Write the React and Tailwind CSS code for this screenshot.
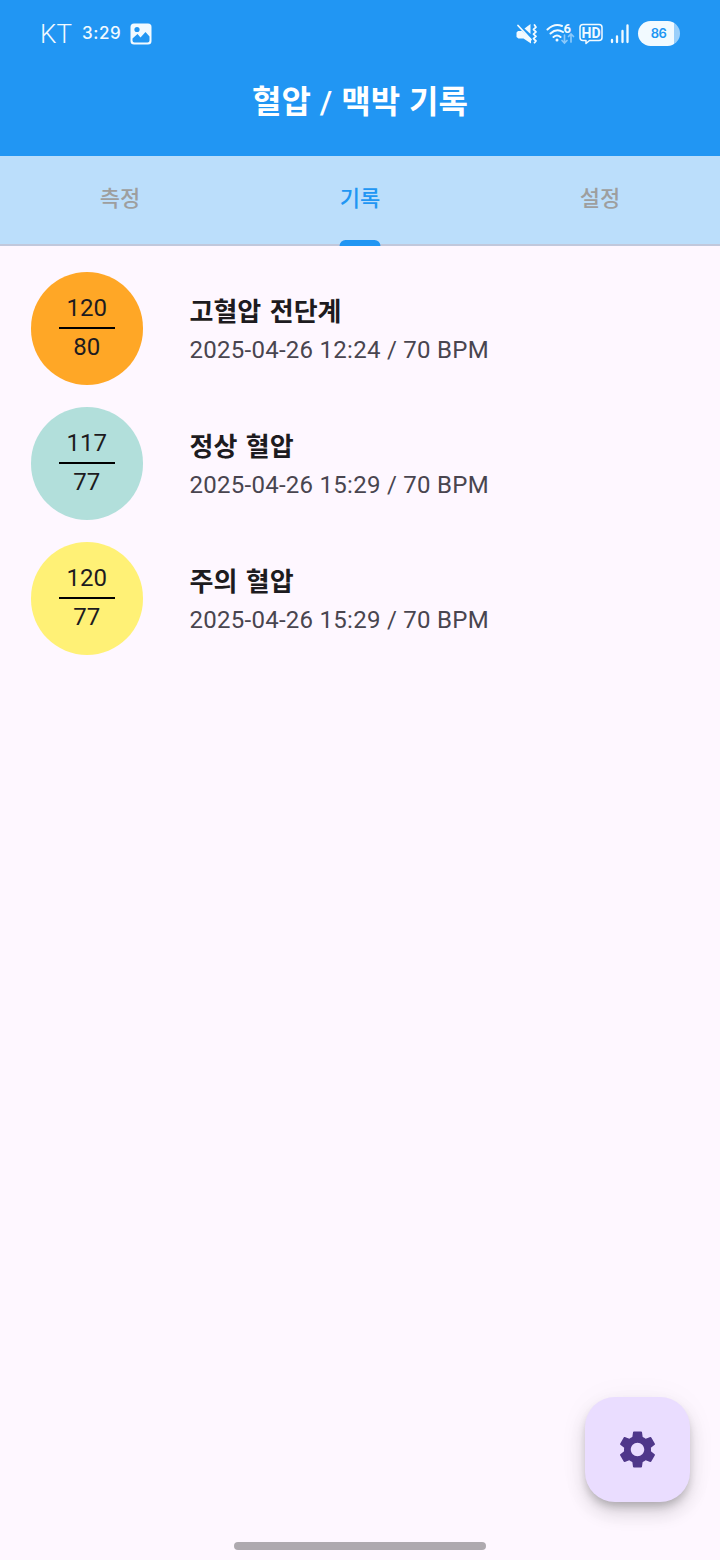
import { MdSettings } from "react-icons/md";

const tabs = [
  { id: "measure", label: "측정" },
  { id: "history", label: "기록" },
  { id: "settings", label: "설정" },
];

const records = [
  { id: 1, systolic: 120, diastolic: 80, status: "고혈압 전단계", date: "2025-04-26 12:24", pulse: 70, color: "bg-[#ffa726]" },
  { id: 2, systolic: 117, diastolic: 77, status: "정상 혈압", date: "2025-04-26 15:29", pulse: 70, color: "bg-[#b2dfdb]" },
  { id: 3, systolic: 120, diastolic: 77, status: "주의 혈압", date: "2025-04-26 15:29", pulse: 70, color: "bg-[#fff176]" },
];

const GalleryIcon = () => (
  <svg width="22" height="22" viewBox="0 0 22 22">
    <rect x="0.500" y="0.500" width="21" height="21" rx="3.5" fill="#f2faff" />
    <circle cx="7" cy="6.500" r="2.600" fill="#2196f3" />
    <path d="M2.500 15.500l5-4.500 3 3.500 5-5.500 4 4.500v4q0 2-2 2H4.500q-2 0-2-2Z" fill="#2196f3" />
  </svg>
);

const VibrateIcon = () => (
  <svg width="22" height="22" viewBox="0 0 22 22" fill="none" stroke="#f2faff" strokeLinecap="round">
    <path d="M2 8h4l9 8v4.500L7.500 15.500H2.500L.5 14V9.500Z" fill="#f2faff" stroke="none" />
    <path d="M14.500 1v10L8.500 5.500Z" fill="#f2faff" stroke="none" />
    <path d="M3.500 2.500l15 16" stroke="#2196f3" strokeWidth="1.200" />
    <path d="M2 2.500l13 14" strokeWidth="1.800" />
    <path d="M18.500 2l1.500 2.200-2.500 2.300 2.500 2.300-2.500 2.300 2.500 2.300-2.500 2.300 2.500 2.300-1.500 1.700" strokeWidth="1.800" strokeLinejoin="round" />
  </svg>
);

const WifiIcon = () => (
  <svg width="29" height="24" viewBox="0 0 29 24" fill="none" strokeLinecap="round">
    <path d="M1.500 7.500Q8.500 1 16 4M4.500 11.500Q10.500 6 17 10M7.500 15Q11 12 14.500 15" stroke="#f2faff" strokeWidth="2" />
    <circle cx="11" cy="18" r="1.500" fill="#f2faff" />
    <text x="17.500" y="10.500" fill="#f2faff" className="font-['Roboto',sans-serif] text-[13px] font-bold">6</text>
    <path d="M18.500 13v7.500M16 18.500l2.500 2.500 2.500-2.500M25 20v-7.500M22.500 14.500L25 12l2.500 2.500" stroke="#8ac8fa" strokeWidth="1.700" />
  </svg>
);

const HdIcon = () => (
  <svg width="24" height="22" viewBox="0 0 24 22" fill="none">
    <path d="M4 1.500h16q3 0 3 3v10q0 3-3 3h-9.500L7 20.500v-3H4q-3 0-3-3v-10q0-3 3-3Z" stroke="#f2faff" strokeWidth="1.500" strokeLinejoin="round" />
    <text x="12" y="14.500" textAnchor="middle" fill="#f2faff" className="font-['Roboto',sans-serif] text-[14px] font-bold">HD</text>
  </svg>
);

const SignalIcon = () => (
  <svg width="20" height="20" viewBox="0 0 20 20" stroke="#f2faff" strokeWidth="2.300" strokeLinecap="round">
    <path d="M2 16v2M7 12.500V18M12.500 7v11M17.500 1.500V18" />
  </svg>
);

const StatusBar = () => (
  <div className="flex h-[67px] items-center pr-[40.5px] pl-10 text-[#f2faff]">
    <span className="text-[26px] leading-none font-light">KT</span>
    <span className="-mt-px ml-[10px] w-[38px] text-center font-['Inter',sans-serif] text-[17px] leading-none font-medium tracking-[0.6px]">3:29</span>
    <span className="ml-[10px]">
      <GalleryIcon />
    </span>
    <div className="ml-auto flex items-center">
      <VibrateIcon />
      <span className="ml-[8px]">
        <WifiIcon />
      </span>
      <span className="ml-[4px]">
        <HdIcon />
      </span>
      <span className="ml-[7px]">
        <SignalIcon />
      </span>
      <div className="ml-[8px] flex h-[25px] w-[42px] items-center justify-center rounded-full bg-linear-to-r from-[#f2faff] from-86% to-[#9bcffa] to-86%">
        <span className="font-['Inter',sans-serif] text-[13px] leading-none font-semibold tracking-[-0.5px] text-[#2196f3]">86</span>
      </div>
    </div>
  </div>
);

const TabBar = ({ active }) => (
  <div className="flex h-[90px] border-b-2 border-[#c1c8dc] bg-[#bbdefb]">
    {tabs.map((tab) => (
      <button
        key={tab.id}
        className={`relative flex flex-1 items-center justify-center pb-[2px] text-[22px] leading-none font-medium ${
          tab.id === active ? "text-[#2196f3]" : "text-[#9e9e9e]"
        }`}
      >
        {tab.label}
        {tab.id === active && (
          <span className="absolute -bottom-[2px] left-1/2 h-[6px] w-[41px] -translate-x-1/2 rounded-t-[6px] bg-[#2196f3]" />
        )}
      </button>
    ))}
  </div>
);

const RecordItem = ({ record }) => (
  <li className="flex h-[135px] items-center pl-[30.5px]">
    <div className={`flex size-[112.5px] flex-col items-center justify-center rounded-full pb-[2px] text-[24px] leading-[37px] text-[#1d1b20] ${record.color}`}>
      <span>{record.systolic}</span>
      <div className="h-[2px] w-[56px] bg-black" />
      <span>{record.diastolic}</span>
    </div>
    <div className="ml-[46.5px] pt-[4px]">
      <p className="text-[26px] leading-[38px] font-bold text-[#1d1b20] [word-spacing:2px]">{record.status}</p>
      <p className="text-[24px] leading-[38px] tracking-[0.27px] text-[#49454f]">
        {record.date} / {record.pulse} BPM
      </p>
    </div>
  </li>
);

const App = () => {
  return (
    <div className="relative flex h-[1560px] w-[720px] flex-col overflow-hidden bg-[#fef7ff] font-['Roboto','Noto_Sans_CJK_KR',sans-serif]">
      <header className="h-[156px] bg-[#2196f3]">
        <StatusBar />
        <h1 className="pt-[1px] text-center text-[32px] leading-[68px] font-bold text-white [word-spacing:1px]">
          혈압 <span className="font-medium">/</span> 맥박 기록
        </h1>
      </header>

      <TabBar active="history" />

      <ul className="flex-1 pt-[15px]">
        {records.map((record) => (
          <RecordItem key={record.id} record={record} />
        ))}
      </ul>

      {/* Floating settings button */}
      <button className="absolute right-[30px] bottom-[58px] flex size-[105px] items-center justify-center rounded-[30px] bg-[#eaddff] text-[#4f378a] shadow-[0_6px_9px_-2px_rgba(0,0,0,0.2),0_11px_19px_rgba(0,0,0,0.14),0_2px_34px_rgba(0,0,0,0.04)]">
        <MdSettings size={45} />
      </button>

      {/* Gesture bar */}
      <div className="mx-auto mb-[10px] h-[8px] w-[252px] rounded-full bg-[#aea9af]" />
    </div>
  );
};

export default App;
